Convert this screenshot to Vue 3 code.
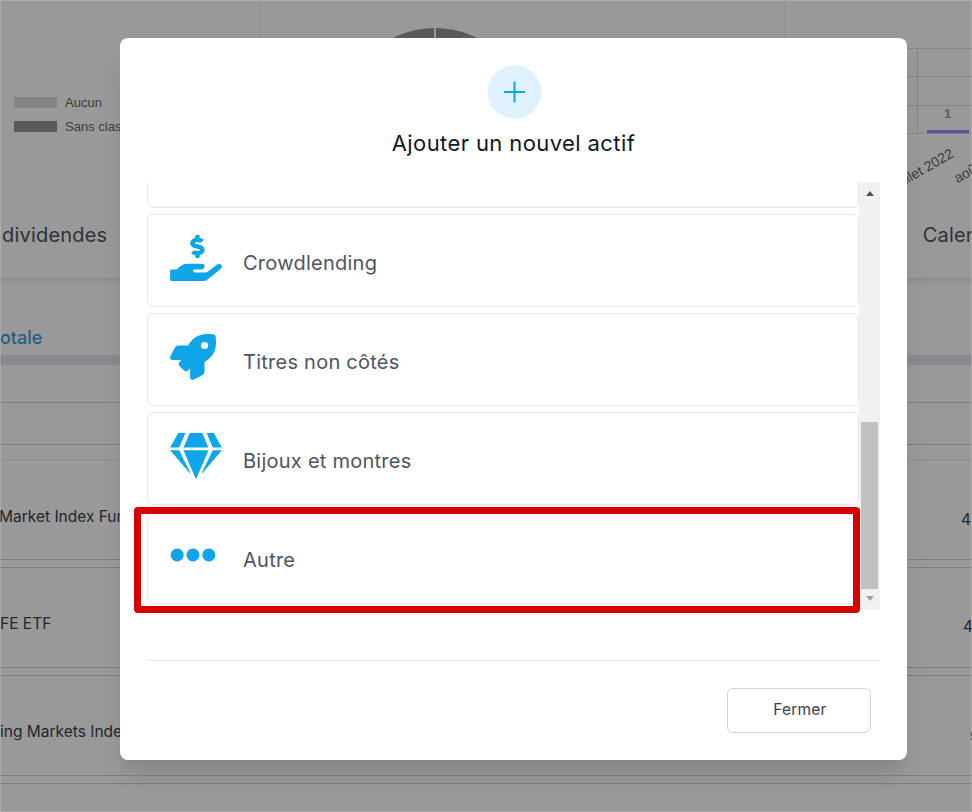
<script setup>
const assets = [
  { label: 'Crowdlending', vb: '0 0 576 512', w: 52, d: 'M271.06,144.3l54.27,14.3a8.59,8.59,0,0,1,6.63,8.1c0,4.6-4.09,8.4-9.12,8.4h-35.6a30,30,0,0,1-11.19-2.2c-5.24-2.2-11.28-1.7-15.3,2l-19,17.5a11.68,11.68,0,0,0-2.25,2.66,11.42,11.42,0,0,0,3.88,15.74,83.77,83.77,0,0,0,34.51,11.5V240c0,8.8,7.83,16,17.37,16h17.37c9.55,0,17.38-7.2,17.38-16V222.4c32.93-3.6,57.84-31,53.5-63-3.15-23-22.46-41.3-46.56-47.7L282.68,97.4a8.59,8.59,0,0,1-6.63-8.1c0-4.6,4.09-8.4,9.12-8.4h35.6A30,30,0,0,1,332,83.1c5.23,2.2,11.28,1.7,15.3-2l19-17.5A11.31,11.31,0,0,0,368.47,61a11.43,11.43,0,0,0-3.84-15.78,83.82,83.82,0,0,0-34.52-11.5V16c0-8.8-7.82-16-17.37-16H295.37C285.82,0,278,7.2,278,16V33.6c-32.89,3.6-57.85,31-53.51,63C227.63,119.6,247,137.9,271.06,144.3ZM565.27,328.1c-11.8-10.7-30.2-10-42.6,0L430.27,402a63.64,63.64,0,0,1-40,14H272a16,16,0,0,1,0-32h78.29c15.9,0,30.71-10.9,33.25-26.6a31.2,31.2,0,0,0,.46-5.46A32,32,0,0,0,352,320H192a117.66,117.66,0,0,0-74.1,26.29L71.4,384H16A16,16,0,0,0,0,400v96a16,16,0,0,0,16,16H372.77a64,64,0,0,0,40-14L564,377a32,32,0,0,0,1.28-48.9Z' },
  { label: 'Titres non côtés', vb: '0 0 512 512', w: 46, d: 'M505.12019,19.09375c-1.18945-5.53125-6.65819-11-12.207-12.1875C460.716,0,435.507,0,410.40747,0,307.17523,0,245.26909,55.20312,199.05238,128H94.83772c-16.34763.01562-35.55658,11.875-42.88664,26.48438L2.51562,253.29688A28.4,28.4,0,0,0,0,264a24.00867,24.00867,0,0,0,24.00582,24H127.81618l-22.47457,22.46875c-11.36521,11.36133-12.99607,32.25781,0,45.25L156.24582,406.625c11.15623,11.1875,32.15619,13.15625,45.27726,0l22.47457-22.46875V488a24.00867,24.00867,0,0,0,24.00581,24,28.55934,28.55934,0,0,0,10.707-2.51562l98.72834-49.39063c14.62888-7.29687,26.50776-26.5,26.50776-42.85937V312.79688c72.59753-46.3125,128.03493-108.40626,128.03493-211.09376C512.07526,76.5,512.07526,51.29688,505.12019,19.09375ZM384.04033,168A40,40,0,1,1,424.05,128,40.02322,40.02322,0,0,1,384.04033,168Z' },
  { label: 'Bijoux et montres', vb: '0 0 576 512', w: 52, d: 'M485.5 0L576 160H474.9L405.7 0h79.8zm-128 0l69.2 160H149.3L218.5 0h139zm-267 0h79.8l-69.2 160H0L90.5 0zM0 192h100.7l123 251.7c1.5 3.1-2.7 5.9-5 3.3L0 192zm148.2 0h279.6l-137 318.2c-1 2.4-4.5 2.4-5.5 0L148.2 192zm204.1 251.7l123-251.7H576L357.3 446.9c-2.3 2.7-6.5-.1-5-3.2z' },
  { label: 'Autre', vb: '0 0 512 512', w: 46, d: 'M328 256c0 39.8-32.2 72-72 72s-72-32.2-72-72 32.2-72 72-72 72 32.2 72 72zm104-72c-39.8 0-72 32.2-72 72s32.2 72 72 72 72-32.2 72-72-32.2-72-72-72zm-352 0c-39.8 0-72 32.2-72 72s32.2 72 72 72 72-32.2 72-72-32.2-72-72-72z' },
]
const rows = [
  { name: 'Market Index Fund', value: '4', cls: 'r1' },
  { name: 'FE ETF', value: '4', cls: 'r2' },
  { name: 'ing Markets Index Fund', value: '9', cls: 'r3' },
]
</script>

<template>
  <div class="page">
    <section class="top">
      <div class="charts">
        <div class="legend">
          <div class="legend-row"><span class="swatch light"></span>Aucun</div>
          <div class="legend-row"><span class="swatch dark"></span>Sans classe</div>
        </div>
        <div class="pie-col"><div class="pie"></div></div>
        <div class="bars">
          <div class="bar-grid">
            <div class="grid-row"><span></span><span class="cell"></span></div>
            <div class="grid-row"><span></span><span class="cell"></span></div>
            <div class="grid-row"><span></span><span class="cell last"><b>1</b><i class="bar"></i></span></div>
          </div>
          <span class="tick tick-a">juillet 2022</span>
          <span class="tick tick-b">août 2022</span>
        </div>
      </div>
      <div class="tabs"><span>dividendes</span><span>Calendrier</span></div>
    </section>
    <div class="subtab">otale</div>
    <div class="band"></div>
    <div class="head h1"></div>
    <div class="head h2"></div>
    <div class="head h3"></div>
    <div v-for="row in rows" :key="row.name" class="row-wrap">
      <div class="data-row" :class="row.cls">
        <span class="name">{{ row.name }}</span>
        <span class="num">{{ row.value }}</span>
      </div>
    </div>

    <div class="overlay">
      <div class="modal">
        <div class="circle">
          <svg width="22" height="22" viewBox="0 0 22 22" fill="none" stroke="currentColor" stroke-width="2">
            <path d="M11 0.5V21.5M0.5 11H21.5" />
          </svg>
        </div>
        <h2 class="title">Ajouter un nouvel actif</h2>
        <div class="scroller">
          <div class="list">
            <div class="item"></div>
            <div v-for="a in assets" :key="a.label" class="item">
              <span class="icon-slot">
                <svg class="icon" :viewBox="a.vb" :width="a.w" height="46" fill="currentColor"><path :d="a.d" /></svg>
              </span>
              <span class="label">{{ a.label }}</span>
            </div>
          </div>
          <div class="track">
            <span class="arrow up"></span>
            <span class="thumb"></span>
            <span class="arrow down"></span>
          </div>
        </div>
        <hr class="rule" />
        <div class="footer"><button class="close" type="button">Fermer</button></div>
        <div class="highlight"></div>
      </div>
    </div>
  </div>
</template>

<style>
html, body { margin: 0; padding: 0; }
</style>

<style scoped>
.page {
  position: relative;
  width: 972px;
  height: 812px;
  overflow: hidden;
  background: #fff;
  font-family: Inter, "Liberation Sans", sans-serif;
  color: #374151;
}
.top {
  height: 278px;
  box-shadow: 0 2px 6px rgba(0, 0, 0, .12);
  display: flex;
  flex-direction: column;
}
.charts { display: flex; height: 190px; flex: none; }
.legend {
  width: 261px;
  box-sizing: border-box;
  padding: 90px 0 0 14px;
  border-right: 1px solid #eceef1;
  font: 13px "Liberation Sans", sans-serif;
  color: #666;
}
.legend-row { display: flex; align-items: center; gap: 8px; height: 24.5px; white-space: nowrap; }
.swatch { width: 43px; height: 11px; flex: none; }
.swatch.light { background: #dcdcdc; }
.swatch.dark { background: #949494; }
.pie-col {
  width: 524px;
  box-sizing: border-box;
  padding: 28px 0 0 81px;
  border-right: 1px solid #eceef1;
}
.pie {
  width: 186px;
  height: 186px;
  border-radius: 50%;
  background: linear-gradient(90deg, #949494 calc(50% - 1px), #fff calc(50% - 1px), #fff calc(50% + 1px), #949494 calc(50% + 1px));
}
.bars { position: relative; flex: 1; padding: 48px 0 0 74px; }
.bar-grid { border-bottom: 1px solid #dcdcdc; }
.grid-row {
  display: grid;
  grid-template-columns: 58px 1fr;
  height: 28.33px;
  border-top: 1px solid #dcdcdc;
  box-sizing: border-box;
}
.cell { border-left: 1px solid #dcdcdc; height: 100%; display: flex; flex-direction: column; align-items: center; justify-content: flex-end; }
.cell.last b { font: bold 13px "Liberation Sans", sans-serif; color: #999; margin-bottom: 9px; margin-left: 5px; }
.bar { display: block; width: 42px; height: 3px; background: #9683f8; margin-left: 5px; }
.tick {
  position: absolute;
  font: 14px "Liberation Sans", sans-serif;
  color: #666;
  white-space: nowrap;
  transform: rotate(-30deg);
  transform-origin: right center;
}
.tick-a { right: 20px; top: 144px; }
.tick-b { left: 170px; top: 171px; transform-origin: left center; }
.tabs {
  flex: 1;
  display: flex;
  justify-content: space-between;
  padding: 33px 0 0 2px;
  font-size: 20px;
  font-weight: 400;
  color: #4b5563;
  white-space: nowrap;
  letter-spacing: .2px;
}
.tabs span:last-child { margin-right: -51px; }
.subtab {
  height: 77px;
  box-sizing: border-box;
  padding-top: 49px;
  font-size: 18px;
  font-weight: 500;
  color: #3b9fdc;
  line-height: 22px;
}
.band { height: 10px; background: #e5e7eb; }
.head { box-sizing: border-box; border-bottom: 1px solid #d1d5db; }
.h1 { height: 38px; }
.h2 { height: 42px; }
.h3 { height: 15px; border-bottom-color: #e5e7eb; }
.row-wrap { height: 108px; box-sizing: border-box; border-bottom: 1px solid #d1d5db; }
.data-row {
  box-sizing: border-box;
  height: 100px;
  padding: 45px 0 0 0;
  display: flex;
  border-bottom: 1px solid #d1d5db;
  font-size: 15.5px;
  line-height: 24px;
  white-space: nowrap;
}
.r1 .name { margin-left: -1px; }
.r2, .r3 { padding-top: 44px; }
.name { width: 962px; flex: none; }
.num { margin-top: 3px; color: #374151; }
.r2 .num { margin-left: 1px; }
.r3 .num { margin-left: 8px; margin-top: 4px; font-size: 13px; }
.overlay {
  position: absolute;
  inset: 0;
  box-sizing: border-box;
  padding: 38px 0 0 120px;
  background: rgba(0, 0, 0, .4);
  box-shadow: inset 0 0 0 1px rgba(255, 255, 255, .18);
}
.modal {
  position: relative;
  width: 787px;
  height: 722px;
  box-sizing: border-box;
  padding: 27px 27px 0;
  background: #fff;
  border-radius: 8px;
  box-shadow: 0 20px 25px -5px rgba(0, 0, 0, .1), 0 10px 10px -5px rgba(0, 0, 0, .04);
}
.circle {
  width: 54px;
  height: 54px;
  margin: 0 auto;
  transform: translateX(.5px);
  border-radius: 50%;
  background: #e0f2fe;
  color: #0ea5e9;
  display: flex;
  align-items: center;
  justify-content: center;
}
.title {
  margin: 10px 0 25px;
  text-align: center;
  font-size: 22px;
  line-height: 28px;
  letter-spacing: .4px;
  font-weight: 400;
  color: #111827;
}
.scroller { display: flex; height: 428px; }
.list {
  flex: 1;
  min-width: 0;
  display: flex;
  flex-direction: column;
  justify-content: flex-end;
  gap: 6px;
  padding-bottom: 6px;
  overflow: hidden;
}
.item {
  flex: none;
  box-sizing: border-box;
  height: 93px;
  display: flex;
  align-items: flex-start;
  padding: 20px 22px;
  background: #fff;
  border: 1px solid #e5e7eb;
  border-radius: 6px;
}
.icon-slot { flex: none; width: 52px; height: 46px; }
.icon { display: block; color: #0ea5e9; }
.label {
  margin: 16px 0 0 21px;
  font-size: 20px;
  line-height: 24px;
  letter-spacing: .25px;
  color: #4b5563;
}
.track {
  width: 21px;
  flex: none;
  background: #f1f1f1;
  display: flex;
  flex-direction: column;
  align-items: center;
}
.arrow { width: 0; height: 0; border-left: 4.5px solid transparent; border-right: 4.5px solid transparent; flex: none; }
.arrow.up { border-bottom: 5px solid #505050; margin-top: 9px; }
.thumb { width: 17px; height: 167px; background: #c1c1c1; margin-top: 226px; flex: none; }
.arrow.down { border-top: 5px solid #a3a3a3; margin-top: 7px; }
.rule { margin: 50px 0 0; border: 0; border-top: 1px solid #e5e7eb; }
.footer { display: flex; justify-content: flex-end; padding: 27px 9px 0 0; }
.close {
  width: 144px;
  height: 45px;
  padding: 0 0 2px 2px;
  background: #fff;
  border: 1px solid #d1d5db;
  border-radius: 6px;
  font: 400 15.5px Inter, sans-serif;
  letter-spacing: .2px;
  color: #374151;
}
.highlight {
  position: absolute;
  left: 14px;
  top: 469px;
  width: 726px;
  height: 106px;
  box-sizing: border-box;
  border: 7px solid #d90000;
  border-radius: 4px;
}
</style>
